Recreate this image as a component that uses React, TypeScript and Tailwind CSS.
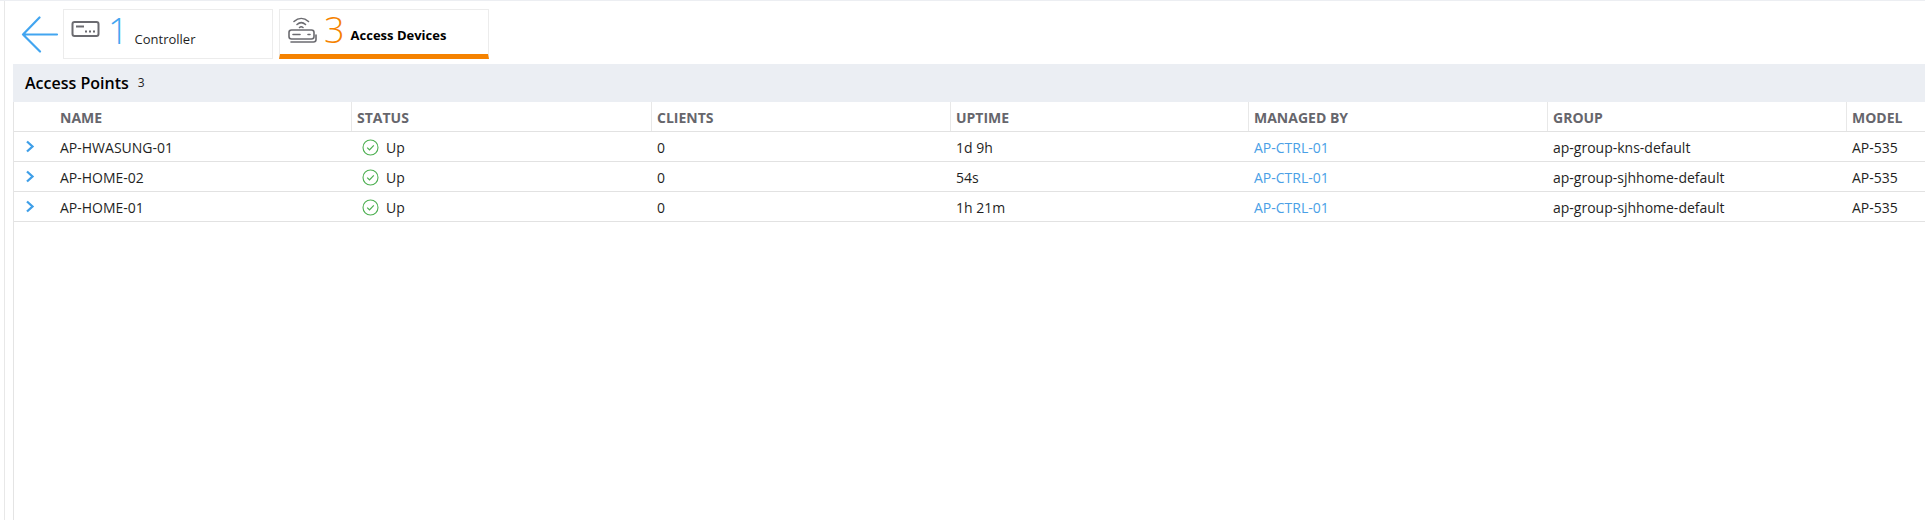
const columns = ["NAME", "STATUS", "CLIENTS", "UPTIME", "MANAGED BY", "GROUP", "MODEL"];

const rows = [
  { name: "AP-HWASUNG-01", uptime: "1d 9h", group: "ap-group-kns-default" },
  { name: "AP-HOME-02", uptime: "54s", group: "ap-group-sjhhome-default" },
  { name: "AP-HOME-01", uptime: "1h 21m", group: "ap-group-sjhhome-default" },
];

const gridCols = "grid grid-cols-[337px_300px_299px_298px_299px_299px_1fr]";

function ControllerIcon() {
  return (
    <svg width="30" height="18" viewBox="0 0 30 18" fill="none" stroke="#6b6b70" strokeWidth="2">
      <rect x="1.500" y="2" width="26" height="14" rx="2" />
      <path d="M5 6.500h8" />
      <path d="M14 11.500h2M18 11.500h2M22 11.500h2" />
    </svg>
  );
}

function AccessDeviceIcon() {
  return (
    <svg width="30" height="30" viewBox="0 0 30 30" fill="none" stroke="#6b6b70" strokeWidth="1.600" strokeLinecap="round">
      <path d="M6 6.500c4.500-4 10-4 14.500 0" />
      <path d="M9 9.500c2.800-2.500 5.700-2.500 8.500 0" />
      <path d="M11.500 12.500c1.200-1 2.300-1 3.500 0" />
      <rect x="1" y="15" width="25" height="9" rx="2.500" />
      <path d="M5 19.500h7M20 19.500h2" />
      <path d="M3 27h22.500c1.500 0 2.500-1 2.500-2.500V20" />
    </svg>
  );
}

function StatusIcon() {
  return (
    <svg width="17" height="17" viewBox="0 0 17 17" fill="none" stroke="#4caf50" strokeWidth="1.100" className="shrink-0">
      <circle cx="8.500" cy="8.500" r="7.500" />
      <path d="M5.200 8.700l2.300 2.300 4.300-4.700" strokeWidth="1.200" />
    </svg>
  );
}

export default function App() {
  return (
    <div className="h-[520px] w-full overflow-hidden bg-white font-['Open_Sans',sans-serif] text-[14px] text-[#1f1f1f] border-t border-[#eceef2]">
      <div className="flex h-full flex-col border-l border-[#e8e8e8] ml-1 pl-2">
        {/* top tabs */}
        <div className="flex h-[63px] shrink-0 items-start pt-2">
          <svg width="38" height="38" viewBox="0 0 38 38" fill="none" stroke="#42a5f0" strokeWidth="2.200" strokeLinecap="round" strokeLinejoin="round" className="ml-2 mr-[4px] mt-[7px] shrink-0">
            <path d="M36 18.500H2M18.500 1.500L2 18.500L19 35.500" />
          </svg>
          <div className="flex h-[50px] w-[210px] items-center border border-[#ececec] pl-[7px]">
            <div className="mb-[10px]"><ControllerIcon /></div>
            <span className="ml-[7px] mb-[6px] text-[36px] leading-none font-light text-[#42a5f0]">1</span>
            <span className="ml-[6px] mt-[12px] text-[13px]">Controller</span>
          </div>
          <div className="ml-[6px] flex h-[50px] w-[210px] items-center border border-[#ececec] border-b-[5px] border-b-[#f58200] pl-[8px]">
            <div className="mb-[4px]"><AccessDeviceIcon /></div>
            <span className="ml-[6px] mb-[4px] text-[36px] leading-none font-light text-[#f58200]">3</span>
            <span className="ml-[6px] mt-[8px] text-[13px] font-bold text-black">Access Devices</span>
          </div>
        </div>

        {/* table panel */}
        <div className="flex h-[38px] shrink-0 items-center bg-[#ebeef3] pl-3 pb-[1px]">
          <span className="text-[16px] font-semibold text-black">Access Points</span>
          <span className="ml-[9px] mt-[1px] text-[12px]">3</span>
        </div>
        <div className="flex-1 border-l border-[#e4e4e4]">
          <div className={`${gridCols} h-[30px] border-b border-[#e2e2e2] font-bold text-[#66666c]`}>
            {columns.map((col, i) => (
              <div key={col} className={`flex items-center border-[#e8e8e8] pt-[1px] ${i === 0 ? "pl-[46px]" : "pl-[5px] border-l"}`}>
                {col}
              </div>
            ))}
          </div>
          {rows.map((row) => (
            <div key={row.name} className={`${gridCols} h-[30px] items-center border-b border-[#e2e2e2] pt-[1px]`}>
              <div className="flex items-center pl-[46px] relative">
                <svg width="10" height="13" viewBox="0 0 10 13" fill="none" stroke="#3f9fe8" strokeWidth="2.300" className="absolute left-[11px] top-[3px]">
                  <path d="M2 1.500l5.500 5-5.500 5" />
                </svg>
                {row.name}
              </div>
              <div className="flex items-center gap-[7px] pl-[11px]">
                <StatusIcon />
                <span>Up</span>
              </div>
              <div className="pl-[6px]">0</div>
              <div className="pl-[6px]">{row.uptime}</div>
              <div className="pl-[6px] text-[#4a9fe6]">AP-CTRL-01</div>
              <div className="pl-[6px]">{row.group}</div>
              <div className="pl-[6px]">AP-535</div>
            </div>
          ))}
        </div>
      </div>
    </div>
  );
}
